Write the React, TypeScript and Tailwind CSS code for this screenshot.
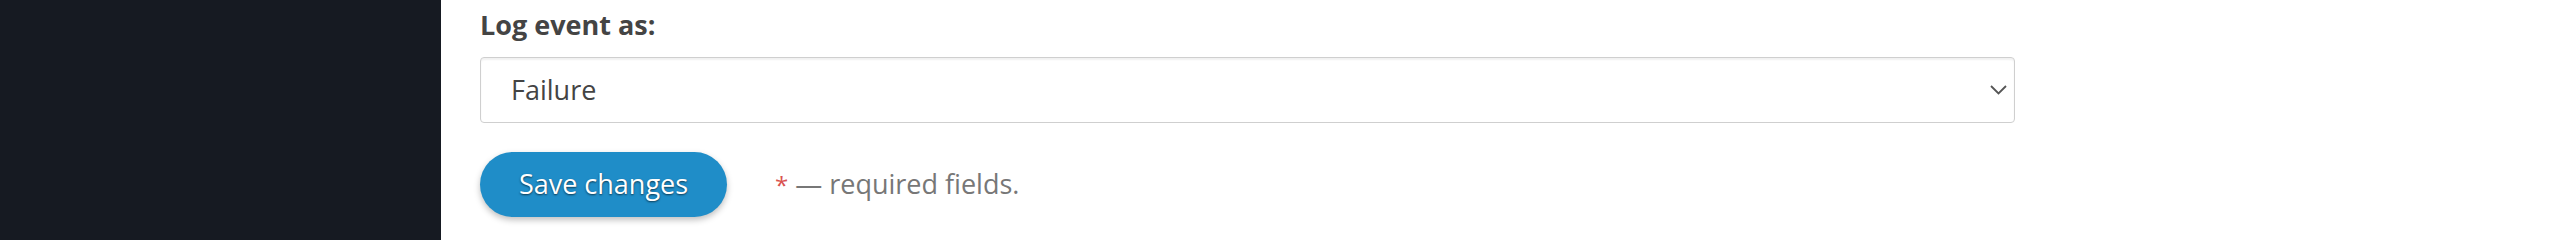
import { useState } from 'react'

export default function App() {
  const [level, setLevel] = useState('failure')

  return (
    <div className="flex h-[240px] w-[2560px] bg-white font-['Open_Sans',sans-serif]">
      <aside className="w-[441px] shrink-0 bg-[#161a22]" />
      <main className="flex flex-col pl-[39px] pt-[6px]">
        <label htmlFor="log-level" className="text-[27px] leading-[37px] font-bold text-[#444]">
          Log event as:
        </label>
        <div className="relative mt-[14px] w-[1535px]">
          <select
            id="log-level"
            value={level}
            onChange={(e) => setLevel(e.target.value)}
            className="h-[66px] w-full appearance-none rounded-[4px] border border-[#cfcfcf] bg-white pl-[30px] text-[27px] text-[#444] shadow-[inset_0_2px_2px_rgba(0,0,0,0.06)] outline-none"
          >
            <option value="success">Success</option>
            <option value="failure">Failure</option>
          </select>
          <svg
            className="pointer-events-none absolute right-[8px] top-[28px]"
            width="17"
            height="10"
            viewBox="0 0 17 10"
            fill="none"
            stroke="#555"
            strokeWidth="1.8"
          >
            <path d="M1 1l7.5 7.5L16 1" />
          </svg>
        </div>
        <div className="mt-[29px] flex items-center gap-[48px]">
          <button className="h-[65px] w-[247px] rounded-full bg-[#1f8dc8] text-[27px] text-white shadow-[0_3px_6px_rgba(0,0,0,0.25)] [text-shadow:0_1px_2px_rgba(0,0,0,0.6)]">
            Save changes
          </button>
          <p className="text-[27px] text-[#777]">
            <span className="text-[24px] text-[#d9534f]">*</span> — required fields.
          </p>
        </div>
      </main>
    </div>
  )
}
